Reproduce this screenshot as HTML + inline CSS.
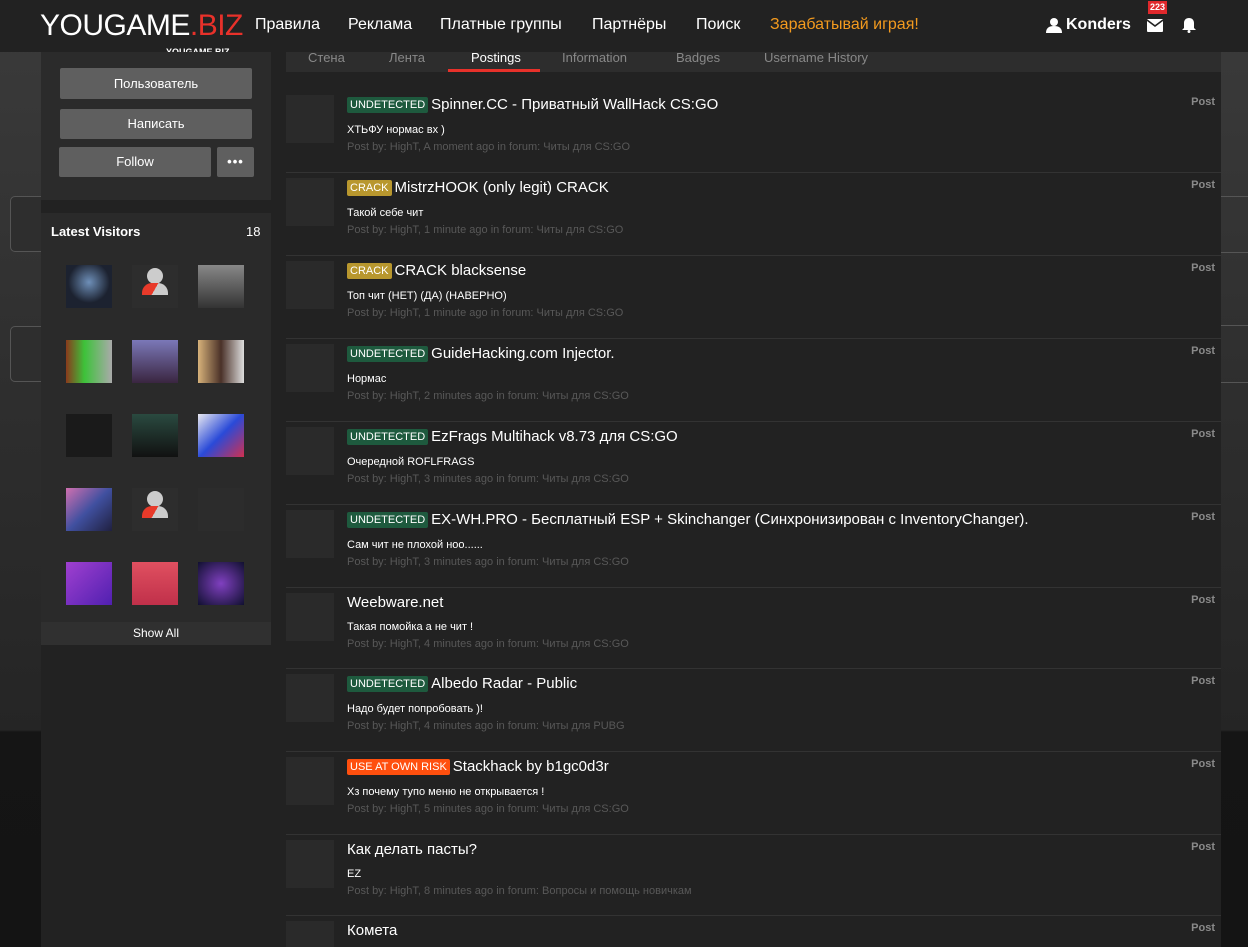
<!DOCTYPE html>
<html style="width:1248px;height:947px;overflow:hidden;background:#141414"><head><meta charset="utf-8"><style>
*{margin:0;padding:0;box-sizing:border-box}
body{width:1248px;height:947px;overflow:hidden;background:linear-gradient(180deg,#3b3b3b 0,#2e2e2e 400px,#252525 730px,#151515 732px,#141414 947px);font-family:"Liberation Sans","Noto Sans CJK SC",sans-serif;position:relative;color:#fff}
.abs{position:absolute}
#hdr{left:0;top:0;width:1248px;height:52px;background:#222}
.logo{left:40px;top:9px;font-size:30px;letter-spacing:-0.5px;color:#fff}
.logo span{color:#e8312a}
.nav{top:16px;font-size:16px;color:#fff}
#main{left:41px;top:52px;width:1180px;height:895px;background:#222}
.pbox{left:41px;top:52px;width:230px;height:148px;background:#2b2b2b}
.btn{background:#5f5f5f;color:#fff;font-size:13px;text-align:center;border-radius:2px}
.vbox{left:41px;top:213px;width:230px;height:432px;background:#2a2a2a}
.av{width:46px;height:43px;background:#333}
.tabs{left:286px;top:52px;width:935px;height:20px;background:#2d2d2d}
.tab{top:50px;font-size:13px;color:#888}
.row{left:286px;width:935px;height:83px}
.ra{left:0;top:0;width:48px;height:48px;background:#2a2a2a}
.tt{left:61px;top:1px;font-size:15px;color:#fff;white-space:nowrap}
.bd{display:inline-block;font-size:11px;padding:2px 3px;border-radius:2px;color:#fff;margin-right:3px;vertical-align:1px}
.u{background:#1e5a3e}.c{background:#b8972e}.r{background:#ff4f0e}
.tx{left:61px;top:29px;font-size:11px;color:#fff}
.mt{left:61px;top:46px;font-size:11px;color:#585858;white-space:nowrap}
.pp{right:6px;top:1px;font-size:11px;font-weight:bold;color:#8a8a8a}
.side{border:1px solid #555;border-radius:5px;background:#2e2e2e}
.sep{left:286px;width:935px;height:1px;background:#333}
</style></head><body>
<div class="abs side" style="left:10px;top:196px;width:40px;height:56px"></div>
<div class="abs side" style="left:10px;top:326px;width:40px;height:56px"></div>
<div class="abs" style="left:1221px;top:196px;width:27px;height:1px;background:#555"></div>
<div class="abs" style="left:1221px;top:252px;width:27px;height:1px;background:#555"></div>
<div class="abs" style="left:1221px;top:325px;width:27px;height:1px;background:#555"></div>
<div class="abs" style="left:1221px;top:382px;width:27px;height:1px;background:#555"></div>
<div class="abs" id="hdr"></div>
<div class="abs logo">YOUGAME<span>.BIZ</span></div>
<div class="abs nav" style="left:255px">Правила</div>
<div class="abs nav" style="left:348px">Реклама</div>
<div class="abs nav" style="left:440px">Платные группы</div>
<div class="abs nav" style="left:592px">Партнёры</div>
<div class="abs nav" style="left:696px">Поиск</div>
<div class="abs nav" style="left:770px;color:#f39a1e">Зарабатывай играя!</div>
<svg class="abs" style="left:1046px;top:17px" width="16" height="16" viewBox="0 0 16 16"><circle cx="8" cy="5" r="4" fill="#fff"/><path d="M0 16c0-5 3-7 8-7s8 2 8 7z" fill="#fff"/></svg>
<div class="abs" style="left:1066px;top:16px;font-size:16px;font-weight:bold">Konders</div>
<svg class="abs" style="left:1147px;top:19px" width="16" height="13" viewBox="0 0 16 13"><rect width="16" height="13" rx="1" fill="#fff"/><path d="M0 1l8 6 8-6" stroke="#222" stroke-width="1.6" fill="none"/></svg>
<div class="abs" style="left:1148px;top:1px;width:19px;height:13px;background:#e0282c;font-size:9px;font-weight:bold;text-align:center;line-height:13px">223</div>
<svg class="abs" style="left:1182px;top:17px" width="14" height="16" viewBox="0 0 14 16"><path d="M7 1c3 0 5 2 5 5v5l2 2H0l2-2V6c0-3 2-5 5-5z" fill="#fff"/><circle cx="7" cy="14.5" r="1.5" fill="#fff"/></svg>
<div class="abs" id="main"></div>
<div class="abs pbox"></div>
<div class="abs" style="left:166px;top:46px;font-size:9px;font-weight:bold;height:6px;overflow:hidden;line-height:12px">YOUGAME.BIZ</div>
<div class="abs btn" style="left:60px;top:68px;width:192px;height:31px;line-height:31px">Пользователь</div>
<div class="abs btn" style="left:60px;top:109px;width:192px;height:30px;line-height:30px">Написать</div>
<div class="abs btn" style="left:59px;top:147px;width:152px;height:30px;line-height:30px">Follow</div>
<div class="abs btn" style="left:217px;top:147px;width:37px;height:30px;line-height:30px;font-weight:bold;letter-spacing:1px">•••</div>
<div class="abs vbox"></div>
<div class="abs" style="left:51px;top:224px;font-size:13px;font-weight:bold">Latest Visitors</div>
<div class="abs" style="left:246px;top:224px;font-size:13px">18</div>
<div class="abs av" style="left:66px;top:265px;background:radial-gradient(circle at 50% 40%,#6e8fb8,#1c2230 60%)"></div>
<div class="abs av" style="left:132px;top:265px;background:#2d2d2d"><div class="abs" style="left:15px;top:3px;width:16px;height:16px;border-radius:50%;background:#ccc"></div><div class="abs" style="left:10px;top:18px;width:26px;height:12px;border-radius:10px 10px 0 0;background:linear-gradient(120deg,#e83a2a 50%,#ccc 50%)"></div></div>
<div class="abs av" style="left:198px;top:265px;background:linear-gradient(#888,#333)"></div>
<div class="abs av" style="left:66px;top:340px;background:linear-gradient(90deg,#8a3a1c,#3dc23a 40%,#aaa)"></div>
<div class="abs av" style="left:132px;top:340px;background:linear-gradient(#7b78b8,#3a2540)"></div>
<div class="abs av" style="left:198px;top:340px;background:linear-gradient(90deg,#d7b27a,#4a3128,#ddd)"></div>
<div class="abs av" style="left:66px;top:414px;background:#1a1a1a"></div>
<div class="abs av" style="left:132px;top:414px;background:linear-gradient(#2a4a40,#111)"></div>
<div class="abs av" style="left:198px;top:414px;background:linear-gradient(135deg,#e8e8f0,#2a4ad8,#d03050)"></div>
<div class="abs av" style="left:66px;top:488px;background:linear-gradient(135deg,#d070b0,#4050a0,#202040)"></div>
<div class="abs av" style="left:132px;top:488px;background:#2d2d2d"><div class="abs" style="left:15px;top:3px;width:16px;height:16px;border-radius:50%;background:#ccc"></div><div class="abs" style="left:10px;top:18px;width:26px;height:12px;border-radius:10px 10px 0 0;background:linear-gradient(120deg,#e83a2a 50%,#ccc 50%)"></div></div>
<div class="abs av" style="left:198px;top:488px;background:#2c2c2c"></div>
<div class="abs av" style="left:66px;top:562px;background:linear-gradient(135deg,#a040d0,#5020b0)"></div>
<div class="abs av" style="left:132px;top:562px;background:linear-gradient(#e05060,#c0304a)"></div>
<div class="abs av" style="left:198px;top:562px;background:radial-gradient(#8040c0,#101030)"></div>
<div class="abs" style="left:41px;top:622px;width:230px;height:23px;background:#303030;text-align:center;font-size:12px;line-height:22px">Show All</div>
<div class="abs tabs"></div>
<div class="abs tab" style="left:308px">Стена</div>
<div class="abs tab" style="left:389px">Лента</div>
<div class="abs tab" style="left:471px;color:#fff">Postings</div>
<div class="abs" style="left:448px;top:69px;width:92px;height:3px;background:#e8312a"></div>
<div class="abs tab" style="left:562px">Information</div>
<div class="abs tab" style="left:676px">Badges</div>
<div class="abs tab" style="left:764px">Username History</div>

<div class="abs row" style="top:95px"><div class="abs ra"></div><div class="abs tt"><span class="bd u">UNDETECTED</span>Spinner.CC - Приватный WallHack CS:GO</div><div class="abs tx">ХТЬФУ нормас вх )</div><div class="abs mt">Post by: HighT, A moment ago in forum: Читы для CS:GO</div><div class="abs pp">Post</div></div>
<div class="abs sep" style="top:172px"></div>
<div class="abs row" style="top:178px"><div class="abs ra"></div><div class="abs tt"><span class="bd c">CRACK</span>MistrzHOOK (only legit) CRACK</div><div class="abs tx">Такой себе чит</div><div class="abs mt">Post by: HighT, 1 minute ago in forum: Читы для CS:GO</div><div class="abs pp">Post</div></div>
<div class="abs sep" style="top:255px"></div>
<div class="abs row" style="top:261px"><div class="abs ra"></div><div class="abs tt"><span class="bd c">CRACK</span>CRACK blacksense</div><div class="abs tx">Топ чит (НЕТ) (ДА) (НАВЕРНО)</div><div class="abs mt">Post by: HighT, 1 minute ago in forum: Читы для CS:GO</div><div class="abs pp">Post</div></div>
<div class="abs sep" style="top:338px"></div>
<div class="abs row" style="top:344px"><div class="abs ra"></div><div class="abs tt"><span class="bd u">UNDETECTED</span>GuideHacking.com Injector.</div><div class="abs tx">Нормас</div><div class="abs mt">Post by: HighT, 2 minutes ago in forum: Читы для CS:GO</div><div class="abs pp">Post</div></div>
<div class="abs sep" style="top:421px"></div>
<div class="abs row" style="top:427px"><div class="abs ra"></div><div class="abs tt"><span class="bd u">UNDETECTED</span>EzFrags Multihack v8.73 для CS:GO</div><div class="abs tx">Очередной ROFLFRAGS</div><div class="abs mt">Post by: HighT, 3 minutes ago in forum: Читы для CS:GO</div><div class="abs pp">Post</div></div>
<div class="abs sep" style="top:504px"></div>
<div class="abs row" style="top:510px"><div class="abs ra"></div><div class="abs tt"><span class="bd u">UNDETECTED</span>EX-WH.PRO - Бесплатный ESP + Skinchanger (Синхронизирован с InventoryChanger).</div><div class="abs tx">Сам чит не плохой ноо......</div><div class="abs mt">Post by: HighT, 3 minutes ago in forum: Читы для CS:GO</div><div class="abs pp">Post</div></div>
<div class="abs sep" style="top:587px"></div>
<div class="abs row" style="top:593px"><div class="abs ra"></div><div class="abs tt">Weebware.net</div><div class="abs tx" style="top:28px">Такая помойка а не чит !</div><div class="abs mt" style="top:45px">Post by: HighT, 4 minutes ago in forum: Читы для CS:GO</div><div class="abs pp">Post</div></div>
<div class="abs sep" style="top:668px"></div>
<div class="abs row" style="top:674px"><div class="abs ra"></div><div class="abs tt"><span class="bd u">UNDETECTED</span>Albedo Radar - Public</div><div class="abs tx">Надо будет попробовать )!</div><div class="abs mt">Post by: HighT, 4 minutes ago in forum: Читы для PUBG</div><div class="abs pp">Post</div></div>
<div class="abs sep" style="top:751px"></div>
<div class="abs row" style="top:757px"><div class="abs ra"></div><div class="abs tt"><span class="bd r">USE AT OWN RISK</span>Stackhack by b1gc0d3r</div><div class="abs tx">Хз почему тупо меню не открывается !</div><div class="abs mt">Post by: HighT, 5 minutes ago in forum: Читы для CS:GO</div><div class="abs pp">Post</div></div>
<div class="abs sep" style="top:834px"></div>
<div class="abs row" style="top:840px"><div class="abs ra"></div><div class="abs tt">Как делать пасты?</div><div class="abs tx" style="top:28px">EZ</div><div class="abs mt" style="top:45px">Post by: HighT, 8 minutes ago in forum: Вопросы и помощь новичкам</div><div class="abs pp">Post</div></div>
<div class="abs sep" style="top:915px"></div>
<div class="abs row" style="top:921px;height:26px;overflow:hidden"><div class="abs ra"></div><div class="abs tt">Комета</div><div class="abs pp">Post</div></div>
</body></html>
